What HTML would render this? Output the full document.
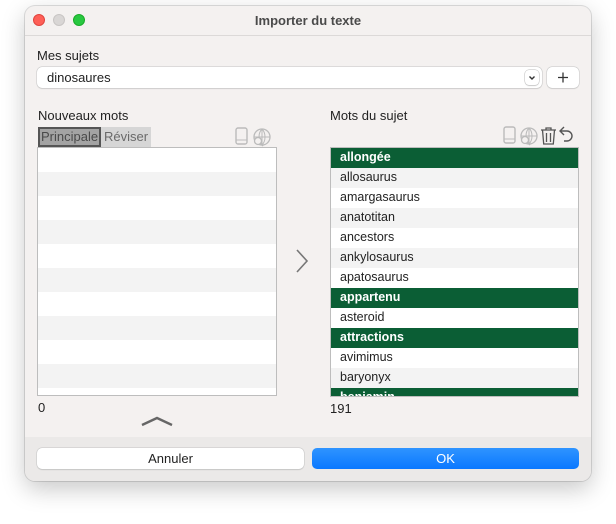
<!DOCTYPE html>
<html><head><style>
*{box-sizing:border-box;margin:0;padding:0}
body{width:616px;height:524px;background:#fff;font-family:"Liberation Sans",sans-serif;font-size:13px;color:#222;position:relative;overflow:hidden}
.win{position:absolute;left:25px;top:6px;width:566px;height:475px;background:#f4f1f0;border-radius:10px;box-shadow:0 8px 24px rgba(0,0,0,.22),0 0 0 1px rgba(0,0,0,.12);overflow:hidden}
.tb{position:absolute;left:0;top:0;width:100%;height:30px;border-bottom:1px solid #dcd9d8;text-align:center;font-weight:bold;font-size:13px;line-height:29px;color:#4a4a4a}
.dot{position:absolute;top:8px;width:12px;height:12px;border-radius:50%}
.abs{position:absolute}
.lbl{position:absolute;font-size:13px;color:#222}
.list{position:absolute;background:#fff;border:1px solid #bdbdbd;overflow:hidden}
.r{height:24px}.r:nth-child(even){background:#f3f3f3}
.rr{height:20px;line-height:19px;padding-left:9px;font-size:12.5px}
.rr:nth-child(even){background:#f3f3f3}
.rr.g{background:#0b5e35;color:#fff;font-weight:bold}
.bottom{position:absolute;left:0;top:431px;width:100%;height:44px;background:#ebe9e8}
</style></head><body>
<div class="win">
<div class="tb">Importer du texte</div>
<div class="dot" style="left:8px;background:#fe5f57;border:1px solid #e0443e"></div>
<div class="dot" style="left:28px;background:#d9d6d5;border:1px solid #c8c5c4"></div>
<div class="dot" style="left:48px;background:#28c840;border:1px solid #1aab29"></div>

<div class="lbl" style="left:12px;top:42px">Mes sujets</div>
<div class="abs" style="left:12px;top:61px;width:505px;height:21px;background:#fff;border-radius:5px;box-shadow:0 0 0 .5px #c4c4c4,0 1px 1px rgba(0,0,0,.12);padding-left:10px;line-height:21px">dinosaures</div>
<div class="abs" style="left:500px;top:64px;width:14px;height:15px;border-radius:4px;background:#fff;box-shadow:0 0 0 .5px #bbb,0 1px 1px rgba(0,0,0,.15)"><svg width="14" height="15"><path d="M4.5 6.5 7 9 9.5 6.5" fill="none" stroke="#333" stroke-width="1.4"/></svg></div>
<div class="abs" style="left:522px;top:61px;width:32px;height:21px;background:#fff;border-radius:5px;box-shadow:0 0 0 .5px #c4c4c4,0 1px 1px rgba(0,0,0,.12)"><svg width="32" height="21"><path d="M16 5.5v10M11 10.5h10" stroke="#333" stroke-width="1.3"/></svg></div>

<div class="lbl" style="left:13px;top:102px">Nouveaux mots</div>
<div class="abs" style="left:13px;top:121px;width:63px;height:20px;background:#a3a3a3;border:2px solid #555;color:#4a4a4a;font-size:13px;line-height:16px;padding-left:1px">Principale</div>
<div class="abs" style="left:76px;top:121px;width:50px;height:20px;background:#d6d6d6;color:#6a6a6a;line-height:20px;padding-left:3px">Réviser</div>
<svg class="abs" style="left:209px;top:120px" width="40" height="22"><rect x="2" y="2" width="11" height="16" rx="2" fill="none" stroke="#bbb" stroke-width="1.4"/><path d="M2 14h11" stroke="#bbb"/><circle cx="28" cy="11" r="8" fill="none" stroke="#bbb" stroke-width="1.3"/><path d="M20 11h16M28 3v16M28 3c-4 4-4 12 0 16M28 3c4 4 4 12 0 16" fill="none" stroke="#bbb"/><circle cx="24" cy="15" r="3.5" fill="#f4f1f0" stroke="#bbb" stroke-width="1.3"/><path d="M26.5 17.5 29 20" stroke="#bbb" stroke-width="1.4"/></svg>
<div class="list" style="left:12px;top:141px;width:240px;height:249px">
<div class="r"></div><div class="r"></div><div class="r"></div><div class="r"></div><div class="r"></div><div class="r"></div><div class="r"></div><div class="r"></div><div class="r"></div><div class="r"></div><div class="r"></div>
</div>
<div class="lbl" style="left:13px;top:394px">0</div>
<svg class="abs" style="left:115px;top:408px" width="36" height="14"><path d="M2 11 17 4 32 11" fill="none" stroke="#666" stroke-width="2.4"/></svg>
<svg class="abs" style="left:268px;top:240px" width="18" height="30"><path d="M4 4 14 15 4 26" fill="none" stroke="#777" stroke-width="1.6"/></svg>

<div class="lbl" style="left:305px;top:102px">Mots du sujet</div>
<svg class="abs" style="left:476px;top:118px" width="80" height="24"><rect x="3" y="3" width="11" height="16" rx="2" fill="none" stroke="#bbb" stroke-width="1.4"/><path d="M3 15h11" stroke="#bbb"/><circle cx="28" cy="12" r="8" fill="none" stroke="#bbb" stroke-width="1.3"/><path d="M20 12h16M28 4v16M28 4c-4 4-4 12 0 16M28 4c4 4 4 12 0 16" fill="none" stroke="#bbb"/><circle cx="24" cy="16" r="3.5" fill="#f4f1f0" stroke="#bbb" stroke-width="1.3"/><path d="M26.5 18.5 29 21" stroke="#bbb" stroke-width="1.4"/><path d="M40 6h15M45 6V4h5v2M41.5 6l1.2 14h9.6l1.2-14M45.5 9v9M49.5 9v9" fill="none" stroke="#555" stroke-width="1.3"/><path d="M63 3 59 7 63 11M59 7h7a5 5 0 0 1 0 10h-3" fill="none" stroke="#555" stroke-width="1.4"/></svg>
<div class="list" style="left:305px;top:141px;width:249px;height:250px">
<div class="rr g">allongée</div><div class="rr">allosaurus</div><div class="rr">amargasaurus</div><div class="rr">anatotitan</div><div class="rr">ancestors</div><div class="rr">ankylosaurus</div><div class="rr">apatosaurus</div><div class="rr g">appartenu</div><div class="rr">asteroid</div><div class="rr g">attractions</div><div class="rr">avimimus</div><div class="rr">baryonyx</div><div class="rr g">benjamin</div>
</div>
<div class="lbl" style="left:305px;top:395px">191</div>

<div class="bottom"></div>
<div class="abs" style="left:12px;top:442px;width:267px;height:21px;background:#fff;border-radius:5px;box-shadow:0 0 0 .5px #c4c4c4,0 1px 1px rgba(0,0,0,.15);text-align:center;line-height:21px">Annuler</div>
<div class="abs" style="left:287px;top:442px;width:267px;height:21px;background:linear-gradient(#2f94ff,#0a78ff);border-radius:5px;text-align:center;line-height:21px;color:#fff">OK</div>
</div>
</body></html>
